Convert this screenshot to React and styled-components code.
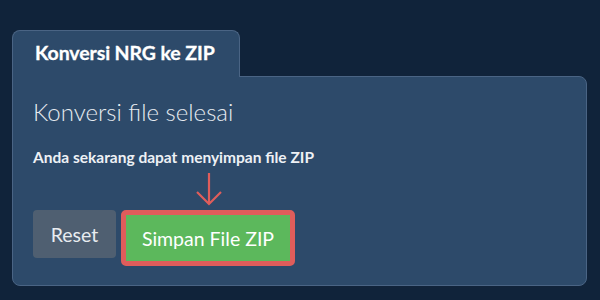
import React from 'react';
import styled, { createGlobalStyle } from 'styled-components';

const GlobalStyle = createGlobalStyle`
  html, body {
    margin: 0;
    padding: 0;
    background: #10233a;
    font-family: Lato, "Noto Sans", sans-serif;
  }
`;

const Page = styled.div`
  width: 600px;
  height: 300px;
  box-sizing: border-box;
  padding: 30px 13px 0 12px;
`;

const Tab = styled.div`
  position: relative;
  z-index: 1;
  width: 228px;
  height: 47px;
  box-sizing: border-box;
  margin-bottom: -1px;
  padding: 10px 0 0 22px;
  background: #2d4a6a;
  border: 1px solid #4a6484;
  border-bottom: none;
  border-radius: 8px 8px 0 0;
  color: #ffffff;
  font-size: 19.5px;
  font-weight: 700;
  letter-spacing: -0.1px;
  -webkit-text-stroke: 0.3px #ffffff;
`;

const Panel = styled.div`
  height: 210px;
  box-sizing: border-box;
  padding: 20px 20px 0 20px;
  background: #2d4a6a;
  border: 1px solid #4a6484;
  border-radius: 0 8px 8px 8px;
`;

const Heading = styled.h2`
  margin: 0;
  color: #e6ebf0;
  font-size: 24px;
  font-weight: 300;
  line-height: 30px;
`;

const Note = styled.p`
  margin: 20px 0 0 0;
  color: #edf1f5;
  font-size: 15.5px;
  font-weight: 700;
  line-height: 20px;
`;

const Actions = styled.div`
  display: flex;
  align-items: flex-start;
  gap: 5px;
  margin-top: 43px;
`;

const Button = styled.button`
  width: 83px;
  height: 48px;
  padding: 0;
  border: none;
  border-radius: 4px;
  background: #4f5f71;
  color: #e8ecf0;
  font-family: Lato, "Noto Sans", sans-serif;
  font-size: 19.5px;
  font-weight: 400;
`;

const Highlight = styled.div`
  position: relative;
  border: 5px solid #df5d5b;
  border-radius: 5px;
  display: flex;
`;

const SaveButton = styled(Button)`
  height: 46px;
  width: 164px;
  border-radius: 0;
  background: #5cb85c;
  color: #ffffff;
`;

const Arrow = styled.svg`
  position: absolute;
  left: 69px;
  top: -44px;
`;

export default function App() {
  return (
    <Page>
      <GlobalStyle />
      <Tab>Konversi NRG ke ZIP</Tab>
      <Panel>
        <Heading>Konversi file selesai</Heading>
        <Note>Anda sekarang dapat menyimpan file ZIP</Note>
        <Actions>
          <Button>Reset</Button>
          <Highlight>
            <Arrow width="28" height="36" viewBox="0 0 28 36">
              <path d="M14 2 V33 M2 21 L14 33 L26 21" fill="none" stroke="#df5d5b" strokeWidth="2.2" />
            </Arrow>
            <SaveButton>Simpan File ZIP</SaveButton>
          </Highlight>
        </Actions>
      </Panel>
    </Page>
  );
}
